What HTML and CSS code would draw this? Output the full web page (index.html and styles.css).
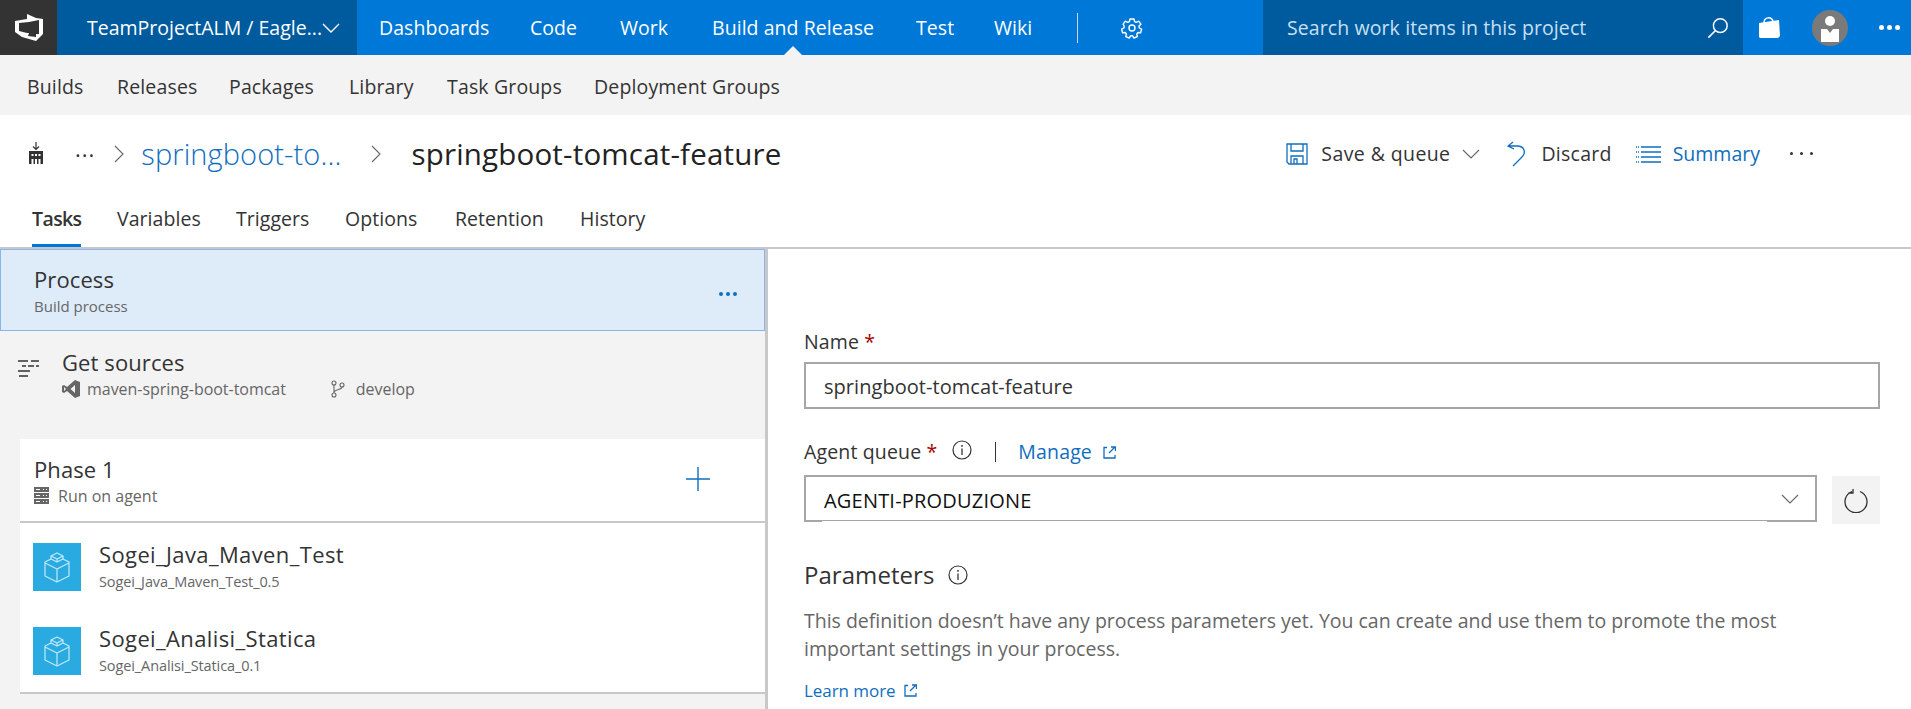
FILE: index.html
```html
<!DOCTYPE html>
<html lang="en">
<head>
<meta charset="utf-8">
<title>springboot-tomcat-feature</title>
<link rel="stylesheet" href="styles.css">
</head>
<body>
<header class="topbar">
  <div class="logo">
    <svg width="28" height="27" viewBox="0 0 28 27"><path fill="#fff" fill-rule="evenodd" d="M12 0l9 4 7 1v15l-7 7-14-4-7-5V7l12-2zM4 9v8l8 2 2 0-1 3 8 1v-3h3V6L14 8z"/></svg>
  </div>
  <div class="project"><span>TeamProjectALM / Eagle...</span>
    <svg class="project-chev" width="18" height="10" viewBox="0 0 18 10"><path d="M1 1l8 8 8-8" fill="none" stroke="#fff" stroke-width="1.4"/></svg>
  </div>
  <nav class="nav">
    <a>Dashboards</a><a>Code</a><a>Work</a><a class="active">Build and Release</a><a>Test</a><a>Wiki</a>
    <i class="nav-sep"></i>
    <svg class="gear" width="22" height="22" viewBox="0 0 22 22"><path fill="none" stroke="#fff" stroke-width="1.4" stroke-linejoin="round" d="M9 2h4l.6 2.6 1.700.8 2.400-1.200 2.200 3-1.900 1.900.3 1.900 2.300 1.200-1 3.500-2.600-.2-1.200 1.500.6 2.600-3.400 1.400-1.400-2.200h-2l-1.400 2.200-3.400-1.400.6-2.600-1.200-1.500-2.600.2-1-3.500 2.300-1.200.3-1.900L2.100 7.200l2.200-3 2.400 1.200 1.700-.8z"/><circle cx="11" cy="11" r="3" fill="none" stroke="#fff" stroke-width="1.4"/></svg>
  </nav>
  <div class="search"><span>Search work items in this project</span>
    <svg width="22" height="22" viewBox="0 0 24 24"><circle cx="14.500" cy="9.500" r="7.500" fill="none" stroke="#fff" stroke-width="1.600"/><path d="M9 15L1.500 22.500" stroke="#fff" stroke-width="1.800"/></svg>
  </div>
  <div class="top-actions">
    <svg class="bag" width="21" height="21" viewBox="0 0 21 21"><path fill="#fff" d="M0 6l20-3 1 16-2 2H1l-1-1z"/><path d="M5 6c0-6 7-7 9-2" fill="none" stroke="#fff" stroke-width="1.500"/></svg>
    <svg class="avatar" width="36" height="36" viewBox="0 0 36 36"><circle cx="18" cy="18" r="18" fill="#7a7a7a"/><circle cx="18" cy="11" r="5" fill="#fff"/><path fill="#fff" d="M9 19h6l3 4 3-4h6v13H9z"/></svg>
    <span class="top-dots"><i></i><i></i><i></i></span>
  </div>
</header>

<nav class="subnav"><a>Builds</a><a>Releases</a><a>Packages</a><a>Library</a><a>Task Groups</a><a>Deployment Groups</a></nav>

<section class="titlebar">
  <svg class="build-icon" width="18" height="24" viewBox="0 0 18 24"><path d="M9 0v7M6 4.500l3 3 3-3" fill="none" stroke="#333" stroke-width="1.200"/><path fill="#333" fill-rule="evenodd" d="M2 9h14v13H2zM4.500 12v2h2v-2zm3.500 0v2h2v-2zm3.500 0v2h2v-2zM4.500 17v5h2v-5zm3.500 0v5h2v-5zm3.500 0v5h2v-5z"/></svg>
  <span class="crumb-dots">···</span>
  <svg class="crumb-chev first" width="10" height="18" viewBox="0 0 10 18"><path d="M1 1l8 8-8 8" fill="none" stroke="#666" stroke-width="1.100"/></svg>
  <a class="crumb-link">springboot-to...</a>
  <svg class="crumb-chev second" width="12" height="18" viewBox="0 0 12 18"><path d="M2 1l8 8-8 8" fill="none" stroke="#666" stroke-width="1.100"/></svg>
  <h1 class="page-title">springboot-tomcat-feature</h1>
  <div class="commands">
    <svg class="cmd-save" width="22" height="22" viewBox="0 0 22 22"><path fill="none" stroke="#106ebe" stroke-width="1.300" d="M1 1h20v20H3l-2-2zM5 1v7h12V1M5 21v-8h12v8M8 21v-5h3v5"/></svg>
    <span class="cmd-text">Save &amp; queue</span>
    <svg class="cmd-chev" width="18" height="10" viewBox="0 0 18 10"><path d="M1 1l8 8 8-8" fill="none" stroke="#666" stroke-width="1.100"/></svg>
    <svg class="cmd-undo" width="20" height="26" viewBox="0 0 20 26"><path d="M7 1L2 5l6 3M2 5h9c8 0 9 7 5 11l-9 9" fill="none" stroke="#106ebe" stroke-width="1.300"/></svg>
    <span class="cmd-text discard">Discard</span>
    <svg class="cmd-list" width="25" height="18" viewBox="0 0 25 18"><path d="M5 2h20M5 7h20M5 12h20M5 17h20" stroke="#106ebe" stroke-width="1.400"/><path d="M0 2h3M0 7h3M0 12h3M0 17h3" stroke="#106ebe" stroke-width="1.400" stroke-dasharray="1 1"/></svg>
    <span class="cmd-text summary">Summary</span>
    <span class="cmd-dots"><i></i><i></i><i></i></span>
  </div>
</section>

<nav class="tabs"><a class="tab-on">Tasks</a><a>Variables</a><a>Triggers</a><a>Options</a><a>Retention</a><a>History</a></nav>

<main class="main">
  <aside class="left">
    <div class="process">
      <div>
        <div class="item-title">Process</div>
        <div class="item-sub">Build process</div>
      </div>
      <span class="process-dots"><i></i><i></i><i></i></span>
    </div>
    <div class="sources">
      <svg class="src-icon" width="21" height="17" viewBox="0 0 21 17"><path d="M0 1h10M13 1h8M4 6h4M10 6h6M18 6h3M0 11h12M1 16h9" stroke="#333" stroke-width="1.400"/></svg>
      <div>
        <div class="item-title">Get sources</div>
        <div class="src-meta">
          <svg width="18" height="18" viewBox="0 0 18 18"><path fill="#666" fill-rule="evenodd" d="M13 0l5 2v14l-5 2-8-7-3 2-2-1V6l2-1 3 2zM13 5L8.500 9l4.500 4zM2 7v4l2-2z"/></svg>
          <span class="src-repo">maven-spring-boot-tomcat</span>
          <svg class="src-branch" width="14" height="18" viewBox="0 0 14 18"><g fill="none" stroke="#666" stroke-width="1.100"><circle cx="3" cy="3" r="2"/><circle cx="3" cy="15" r="2"/><circle cx="11" cy="5" r="2"/><path d="M3 5v8M11 7c0 3-6 2-8 5"/></g></svg>
          <span>develop</span>
        </div>
      </div>
    </div>
    <div class="phase">
      <div class="phase-head">
        <div>
          <div class="item-title">Phase 1</div>
          <div class="item-sub run"><svg width="15" height="17" viewBox="0 0 15 17"><path fill="#666" d="M0 0h15v5H0zM0 6h15v5H0zM0 12h15v5H0z"/><path stroke="#fff" d="M2 2.500h4M9 2.500h1M12 2.500h1M2 8.500h4M9 8.500h1M12 8.500h1M2 14.500h4M9 14.500h1M12 14.500h1"/></svg><span>Run on agent</span></div>
        </div>
        <svg class="plus" width="24" height="24" viewBox="0 0 24 24"><path d="M12 0v24M0 12h24" stroke="#106ebe" stroke-width="1.400"/></svg>
      </div>
      <div class="tasklist">
        <div class="task">
          <div class="task-icon"><svg width="28" height="31" viewBox="0 0 28 31"><g fill="none" stroke="#c4e8f9" stroke-width="1.200" stroke-linejoin="round"><path d="M14 1l6 3v3l6 3v14l-12 6-12-6V10l6-3V4z"/><path d="M8 4l6 3 6-3M8 7l6 3 6-3M14 7v3M2 11l12 6 12-6M14 17v13"/></g></svg></div>
          <div><div class="item-title">Sogei_Java_Maven_Test</div><div class="item-sub">Sogei_Java_Maven_Test_0.5</div></div>
        </div>
        <div class="task">
          <div class="task-icon"><svg width="28" height="31" viewBox="0 0 28 31"><g fill="none" stroke="#c4e8f9" stroke-width="1.200" stroke-linejoin="round"><path d="M14 1l6 3v3l6 3v14l-12 6-12-6V10l6-3V4z"/><path d="M8 4l6 3 6-3M8 7l6 3 6-3M14 7v3M2 11l12 6 12-6M14 17v13"/></g></svg></div>
          <div><div class="item-title">Sogei_Analisi_Statica</div><div class="item-sub">Sogei_Analisi_Statica_0.1</div></div>
        </div>
      </div>
    </div>
  </aside>
  <section class="right">
    <div class="label">Name <b>*</b></div>
    <div class="field name-field">springboot-tomcat-feature</div>
    <div class="label queue">
      <span>Agent queue <b>*</b></span>
      <svg class="info" width="20" height="20" viewBox="0 0 20 20"><circle cx="10" cy="10" r="9" fill="none" stroke="#333" stroke-width="1.200"/><path d="M10 8.500V15" stroke="#333" stroke-width="1.300"/><path d="M10 5v1.800" stroke="#333" stroke-width="1.500"/></svg>
      <i class="bar"></i>
      <a class="link">Manage</a>
      <svg class="ext" width="13" height="13" viewBox="0 0 13 13"><path d="M4 1.500H1v10.500h11V9M6 7l6-6M8 1h4.500v4" fill="none" stroke="#106ebe" stroke-width="1.300"/></svg>
    </div>
    <div class="queue-row">
      <div class="field select"><span class="select-value">AGENTI-PRODUZIONE</span>
        <svg width="18" height="10" viewBox="0 0 18 10"><path d="M1 1l8 8 8-8" fill="none" stroke="#666" stroke-width="1.100"/></svg>
      </div>
      <div class="refresh"><svg width="25" height="25" viewBox="0 0 25 25"><path d="M16 3.500a11 11 0 1 1-8 0M9 1v4H4.500" fill="none" stroke="#333" stroke-width="1.300"/></svg></div>
    </div>
    <h2 class="params">Parameters
      <svg class="info" width="20" height="20" viewBox="0 0 20 20"><circle cx="10" cy="10" r="9" fill="none" stroke="#333" stroke-width="1.200"/><path d="M10 8.500V15" stroke="#333" stroke-width="1.300"/><path d="M10 5v1.800" stroke="#333" stroke-width="1.500"/></svg>
    </h2>
    <p class="desc">This definition doesn’t have any process parameters yet. You can create and use them to promote the most important settings in your process.</p>
    <div class="learn"><a class="link">Learn more</a>
      <svg class="ext" width="13" height="13" viewBox="0 0 13 13"><path d="M4 1.500H1v10.500h11V9M6 7l6-6M8 1h4.500v4" fill="none" stroke="#106ebe" stroke-width="1.300"/></svg>
    </div>
  </section>
</main>
</body>
</html>
```

FILE: styles.css
```css
* { box-sizing: border-box; }
html, body { margin: 0; height: 709px; overflow: hidden; }
body { font-family: "Open Sans", "Noto Sans", sans-serif; font-size: 19.5px; letter-spacing: .15px; color: #333; background: #fff; }
svg { display: block; flex: none; }
a { cursor: pointer; }

.topbar { display: flex; height: 55px; background: #0078d7; color: #fff; }
.logo { width: 57px; background: #333; display: flex; align-items: center; justify-content: center; }
.project { width: 300px; background: #005a9e; display: flex; align-items: center; padding-left: 30px; letter-spacing: 0; white-space: nowrap; }
.nav { flex: 1; display: grid; grid-template-columns: 151px 90px 92px 204px 78px 83px auto auto; justify-content: start; justify-items: start; align-items: center; padding-left: 22px; letter-spacing: .05px; }
.nav a { position: relative; line-height: 55px; }
.nav .active::after { content: ""; position: absolute; left: 50%; bottom: 0; margin-left: -9px; border: 9px solid transparent; border-top: 0; border-bottom-color: #f3f3f3; }
.nav-sep { width: 1px; height: 30px; background: #c8d8e8; }
.gear { margin-left: 43px; }
.search { width: 480px; background: #005a9e; display: flex; align-items: center; justify-content: space-between; padding: 0 14px 0 24px; color: #c7e0f4; letter-spacing: .1px; }
.top-actions { flex: none; width: 168px; display: flex; align-items: center; padding-left: 16px; }
.bag { margin-top: -1px; }
.avatar { margin-left: 32px; }
.top-dots { display: flex; gap: 3px; margin-left: 31px; }
.top-dots i { width: 5px; height: 5px; border-radius: 50%; background: #fff; }

.subnav { display: grid; grid-template-columns: 90px 112px 120px 98px 147px auto; justify-content: start; align-items: center; height: 60px; background: #f3f3f3; padding: 2px 0 0 27px; }

.titlebar { display: flex; align-items: center; height: 75px; padding: 2px 0 0 27px; }
.crumb-dots { margin-left: 30px; font-size: 22px; letter-spacing: 1px; color: #333; }
.crumb-chev.first { margin-left: 19px; }
.crumb-link { margin-left: 17px; font-size: 29px; letter-spacing: .1px; color: #106ebe; font-weight: 300; white-space: nowrap; }
.crumb-chev.second { margin-left: 29px; }
.page-title { margin: 0 0 0 29px; font-size: 29.5px; font-weight: 400; letter-spacing: .18px; color: #222; white-space: nowrap; }
.commands { margin-left: auto; padding-right: 98px; display: flex; align-items: center; }
.cmd-text { margin-left: 13px; letter-spacing: .4px; }
.cmd-chev { margin-left: 12px; }
.cmd-undo { margin-left: 26px; }
.discard { margin-left: 15px; letter-spacing: .25px; }
.cmd-list { margin-left: 24px; }
.summary { color: #106ebe; margin-left: 12px; letter-spacing: 0; }
.cmd-dots { display: flex; gap: 7px; margin-left: 30px; }
.cmd-dots i { width: 3px; height: 3px; border-radius: 50%; background: #333; }

.tabs { display: grid; grid-template-columns: 85px 119px 109px 110px 125px auto; justify-content: start; justify-items: start; height: 59px; padding-left: 32px; border-bottom: 2px solid #c8c8c8; letter-spacing: .05px; }
.tabs a { line-height: 58px; height: 57px; }
.tab-on { font-weight: 600; letter-spacing: -.6px; border-bottom: 3px solid #0078d7; }

.main { display: flex; height: 460px; }
.left { width: 768px; flex: none; background: #f3f3f3; border-right: 3px solid #c8c8c8; display: flex; flex-direction: column; }
.process { height: 82px; background: #deecf9; border: 1px solid #8ab4ea; display: flex; align-items: center; justify-content: space-between; padding: 0 27px 0 33px; }
.process-dots { display: flex; gap: 3px; margin-top: 8px; }
.process-dots i { width: 4px; height: 4px; border-radius: 50%; background: #106ebe; }
.item-title { font-size: 22px; letter-spacing: .1px; color: #333; line-height: 28px; }
.item-sub { font-size: 15px; letter-spacing: 0; color: #666; line-height: 20px; margin-top: 3px; }

.sources { height: 108px; display: flex; padding: 17px 0 0 18px; }
.src-icon { margin: 12px 23px 0 0; }
.src-meta { display: flex; align-items: center; font-size: 16px; letter-spacing: -.03px; color: #666; margin-top: 2px; line-height: 22px; }
.src-repo { margin-left: 7px; }
.src-branch { margin: 0 11px 0 45px; }

.phase { margin-left: 20px; background: #fff; border-bottom: 2px solid #c8c8c8; }
.phase-head { height: 84px; border-bottom: 2px solid #c8c8c8; display: flex; justify-content: space-between; align-items: center; padding: 0 55px 0 14px; }
.plus { margin-top: -2px; }
.run { display: flex; align-items: center; gap: 9px; font-size: 16px; }
.tasklist { padding-top: 20px; height: 169px; }
.task { display: flex; align-items: flex-start; gap: 18px; height: 84px; padding-left: 13px; }
.task-icon { width: 48px; height: 48px; background: #29abe2; display: flex; align-items: center; justify-content: center; }
.task .item-title { margin-top: -3px; letter-spacing: .38px; }
.task .item-sub { font-size: 14.5px; letter-spacing: -.1px; margin-top: 4px; }

.right { flex: 1; padding: 80px 31px 0 36px; }
.label { line-height: 26px; height: 26px; color: #333; }
.label b { color: #a80000; font-weight: 400; }
.field { height: 47px; border: 2px solid #a6a6a6; display: flex; align-items: center; padding-left: 18px; font-size: 20px; letter-spacing: .05px; color: #333; margin-top: 7px; }
.name-field { padding-top: 1px; }
.queue { display: flex; align-items: center; margin-top: 30px; }
.queue .info { margin-left: 15px; margin-top: -4px; }
.bar { width: 1px; height: 20px; background: #333; margin: 0 22px 0 23px; }
.link { color: #106ebe; }
.ext { margin-left: 11px; }
.queue-row { display: flex; justify-content: space-between; align-items: flex-start; margin-top: 10px; }
.select { width: 1013px; margin-top: 0; position: relative; justify-content: space-between; padding-right: 16px; color: #111; }
.select-value { letter-spacing: .2px; margin-top: 3px; }
.select::after { content: ""; position: absolute; left: 16px; right: 48px; bottom: -2px; height: 1px; background: #fff; }
.refresh { width: 48px; height: 48px; background: #f3f3f3; display: flex; align-items: center; justify-content: center; margin-top: 1px; }
.params { display: flex; align-items: center; margin: 36px 0 0; font-size: 24px; font-weight: 400; letter-spacing: .05px; line-height: 30px; color: #333; }
.params .info { margin-left: 14px; }
.desc { margin: 17px 0 0; font-size: 19.5px; letter-spacing: -.01px; line-height: 28px; color: #666; width: 1000px; }
.learn { display: flex; align-items: center; margin-top: 16px; font-size: 17px; letter-spacing: -.05px; }
.learn .ext { margin-left: 8px; }
```
